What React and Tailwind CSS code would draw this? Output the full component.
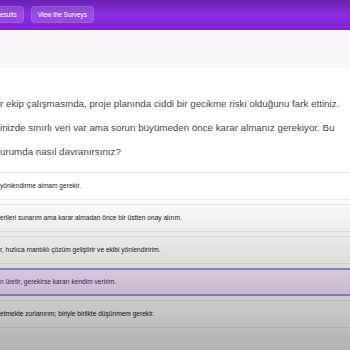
import React from 'react';

const lines = [
  'r ekip çalışmasında, proje planında ciddi bir gecikme riski olduğunu fark ettiniz.',
  'inizde sınırlı veri var ama sorun büyümeden önce karar almanız gerekiyor. Bu',
  'urumda nasıl davranırsınız?',
];

const options = [
  { text: 'yönlendirme almam gerekir.' },
  { text: 'erileri sunarım ama karar almadan önce bir üstten onay alırım.' },
  { text: 'r, hızlıca mantıklı çözüm geliştirir ve ekibi yönlendiririm.' },
  { text: 'n üretir, gerekirse kararı kendim veririm.', selected: true },
  { text: 'etmekte zorlanırım; biriyle birlikte düşünmem gerekir.' },
];

export default function App() {
  return (
    <div className="relative w-[350px] h-[350px] overflow-hidden bg-white font-['Liberation_Sans',Arial,sans-serif]">
      <header className="h-[30px] border-b border-[#7a22cc] bg-[linear-gradient(to_bottom,#6622b0,#8a2ee0_50%,#7e24d4)] flex items-center gap-[7px]">
        <button className="-ml-[7px] h-[17px] px-[6px] rounded-[4px] bg-white/15 border border-white/10 text-white text-[6.4px]">
          esults
        </button>
        <button className="h-[17px] px-[6px] rounded-[4px] bg-white/15 border border-white/10 text-white text-[6.4px]">
          View the Surveys
        </button>
      </header>

      <div className="h-[38px] bg-[#fcf6fc]" />

      <div className="pt-[24px] text-[9.75px] leading-[24px] text-[#474747] whitespace-nowrap">
        {lines.map((l) => (
          <div key={l}>{l}</div>
        ))}
      </div>

      <div className="mt-[8px] flex flex-col gap-[4px]">
        {options.map((o) => (
          <div
            key={o.text}
            className={
              o.selected
                ? 'h-[28px] flex items-center border-y-2 border-[#a88ef0] bg-[#f6eaff] text-[6.6px] text-[#4b2a7a] whitespace-nowrap'
                : 'h-[28px] flex items-center border-y border-[#ececec] bg-white text-[6.6px] text-[#222] whitespace-nowrap'
            }
          >
            {o.text}
          </div>
        ))}
      </div>

      <div className="pointer-events-none absolute inset-0 bg-[linear-gradient(to_bottom,transparent_55%,rgba(0,0,0,0.3))]" />
    </div>
  );
}
